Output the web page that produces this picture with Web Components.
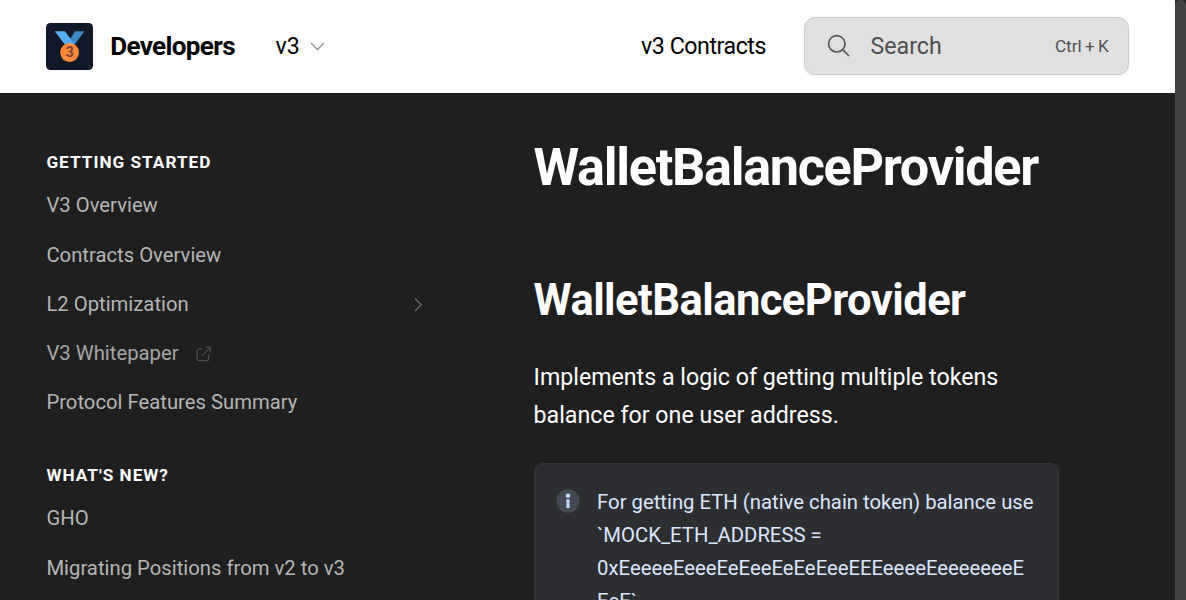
<!DOCTYPE html>
<html lang="en">
<head>
<meta charset="utf-8">
<title>WalletBalanceProvider - Developers</title>
<style>
html, body { margin: 0; height: 100%; overflow: hidden; background: #1f1f1f; }
body { font-family: Roboto, "Liberation Sans", sans-serif; color: #fff; }
</style>
</head>
<body>
<docs-app></docs-app>
<script>
function define(name, markup) {
  const template = document.createElement('template');
  template.innerHTML = markup;
  customElements.define(name, class extends HTMLElement {
    constructor() {
      super();
      this.attachShadow({ mode: 'open' }).appendChild(template.content.cloneNode(true));
    }
  });
}

define('medal-logo', `
<style>:host{display:block;width:47px;height:47px}svg{display:block}text{font:bold 14px Roboto,sans-serif}</style>
<svg width="47" height="47" viewBox="0 0 47 47">
  <rect width="47" height="47" rx="4.5" fill="#111827"/>
  <path d="M29 8.3h9.5L28.3 22h-8z" fill="#3b88c3"/>
  <path d="M8.7 8.3h10.3l9.8 13.2-9.3 1z" fill="#55acee"/>
  <circle cx="23.6" cy="29.5" r="9.4" fill="#ff8a3b"/>
  <text x="23.8" y="34.4" text-anchor="middle" fill="#7d4030">3</text>
</svg>`);

define('search-box', `
<style>
:host{display:flex;align-items:center;box-sizing:border-box;width:325px;height:58px;border:1.5px solid #cdcdcd;border-radius:11px;background:#e0e0e0;box-shadow:0 1px 3px rgba(0,0,0,.08);padding:0 19.2px 0 22px;color:#4f4f4f}
svg{flex:none;margin:0 19.5px 1px 0}
.label{font-size:23.2px;line-height:38px;flex:1}
.key{font-size:17.2px;line-height:24px;white-space:pre;word-spacing:-1px}
</style>
<svg width="24" height="24" viewBox="0 0 24 24" fill="none" stroke="#555" stroke-width="1.7"><circle cx="9.8" cy="9.8" r="8.2"/><path d="M15.7 15.7 22 22"/></svg>
<span class="label"><slot></slot></span><span class="key"><slot name="key"></slot></span>`);

define('top-bar', `
<style>
:host{display:flex;align-items:center;box-sizing:border-box;width:1175px;height:93px;flex:none;padding:0 46px 1px;background:#fff;color:#000;font-size:23.2px;line-height:38px}
medal-logo{padding-top:1px}
.brand{font-size:26.1px;font-weight:700;margin-left:17.2px;width:165.3px;letter-spacing:-.67px}
.version{display:flex;align-items:center;flex:1}
.version svg{margin-left:10px}
.link{margin-right:38px;letter-spacing:-.45px}
</style>
<medal-logo></medal-logo>
<div class="brand">Developers</div>
<div class="version">v3<svg width="15" height="9" viewBox="0 0 15 9" fill="none" stroke="#8f8f8f" stroke-width="1.3"><path d="m1 1 6.5 6.5L14 1"/></svg></div>
<div class="link">v3 Contracts</div>
<search-box>Search<span slot="key">Ctrl + K</span></search-box>`);

define('nav-group', `
<style>
:host{display:block}
h2{margin:0;font-size:17.2px;font-weight:700;line-height:24px;height:30.7px;letter-spacing:1px;color:#fff;text-transform:uppercase}
</style>
<h2><slot name="title"></slot></h2><slot></slot>`);

define('nav-item', `
<style>
:host{display:flex;align-items:center;height:49.25px;font-size:20.27px;line-height:30px;color:#b5b5b5}
svg{display:none}
:host([expandable]) .chevron{display:block;margin:1px 18px 0 auto}
:host([external]) .out{display:block;margin:1px 0 0 17.7px}
:host([external]){color:#a6a6a6}
</style>
<slot></slot>
<svg class="out" width="16" height="16" viewBox="0 0 17 17" fill="none" stroke="#4b4b4b" stroke-width="1.4"><path d="M7.5 3.3H3.2A2 2 0 0 0 1.2 5.3v8.2a2 2 0 0 0 2 2h8.2a2 2 0 0 0 2-2V9.2M6.3 10.5 15 1.8M10 1.5h5.2v5.2"/></svg>
<svg class="chevron" width="9" height="15" viewBox="0 0 9 15" fill="none" stroke="#6c6c6c" stroke-width="1.3"><path d="M1 1.5 7.3 7.8 1 14"/></svg>`);

define('side-nav', `
<style>:host{display:flex;flex-direction:column;gap:36px;width:394.4px;margin-left:46.4px;padding-top:57px;flex:none}</style>
<nav-group><span slot="title">Getting Started</span>
<nav-item>V3 Overview</nav-item><nav-item>Contracts Overview</nav-item><nav-item expandable>L2 Optimization</nav-item><nav-item external>V3 Whitepaper</nav-item><nav-item>Protocol Features Summary</nav-item></nav-group>
<nav-group><span slot="title">What's new?</span>
<nav-item>GHO</nav-item><nav-item>Migrating Positions from v2 to v3</nav-item></nav-group>`);

define('hint-box', `
<style>
:host{display:flex;box-sizing:border-box;width:525px;height:200px;border:1.5px solid #31353a;border-radius:9px;background:#2c2e32;padding:22px 22px;color:#dbe7ff;font-size:20.3px;line-height:33px}
svg{flex:none;margin:2.5px 17px 0 -.5px}
p{margin:0;white-space:nowrap}
</style>
<svg width="24" height="24" viewBox="0 0 24 24"><circle cx="12" cy="12" r="11.7" fill="#434952"/><circle cx="12" cy="6.8" r="2.3" fill="#c0d9ff"/><rect x="10.4" y="10.3" width="3.2" height="9" rx="1" fill="#c0d9ff"/></svg>
<p><slot></slot></p>`);

define('doc-article', `
<style>
:host{display:block;width:526px;margin-left:92.8px;padding-top:43px}
h1{margin:0 0 69px;font-size:52.2px;line-height:64px;font-weight:700;letter-spacing:-1.3px}
h2{margin:0 0 25px;font-size:43.5px;line-height:64px;font-weight:700;letter-spacing:-.54px}
p{margin:0 0 29px;font-size:23.2px;line-height:38px}
</style>
<h1>WalletBalanceProvider</h1>
<h2>WalletBalanceProvider</h2>
<p>Implements a logic of getting multiple tokens<br>balance for one user address.</p>
<hint-box>For getting ETH (native chain token) balance use<br>\`MOCK_ETH_ADDRESS =<br>0xEeeeeEeeeEeEeeEeEeEeeEEEeeeeEeeeeeeeE<br>EeE\`</hint-box>`);

define('scroll-track', `
<style>:host{display:block;width:11px;flex:none;background:#242424}div{height:620px;border-radius:5px;background:#424242}</style><div></div>`);

define('docs-app', `
<style>
:host{display:flex;width:1186px;height:600px;overflow:hidden;background:#1f1f1f}
.page{display:flex;flex-direction:column;width:1175px;flex:none}
main{display:flex}
</style>
<div class="page"><top-bar></top-bar><main><side-nav></side-nav><doc-article></doc-article></main></div>
<scroll-track></scroll-track>`);
</script>
</body>
</html>
